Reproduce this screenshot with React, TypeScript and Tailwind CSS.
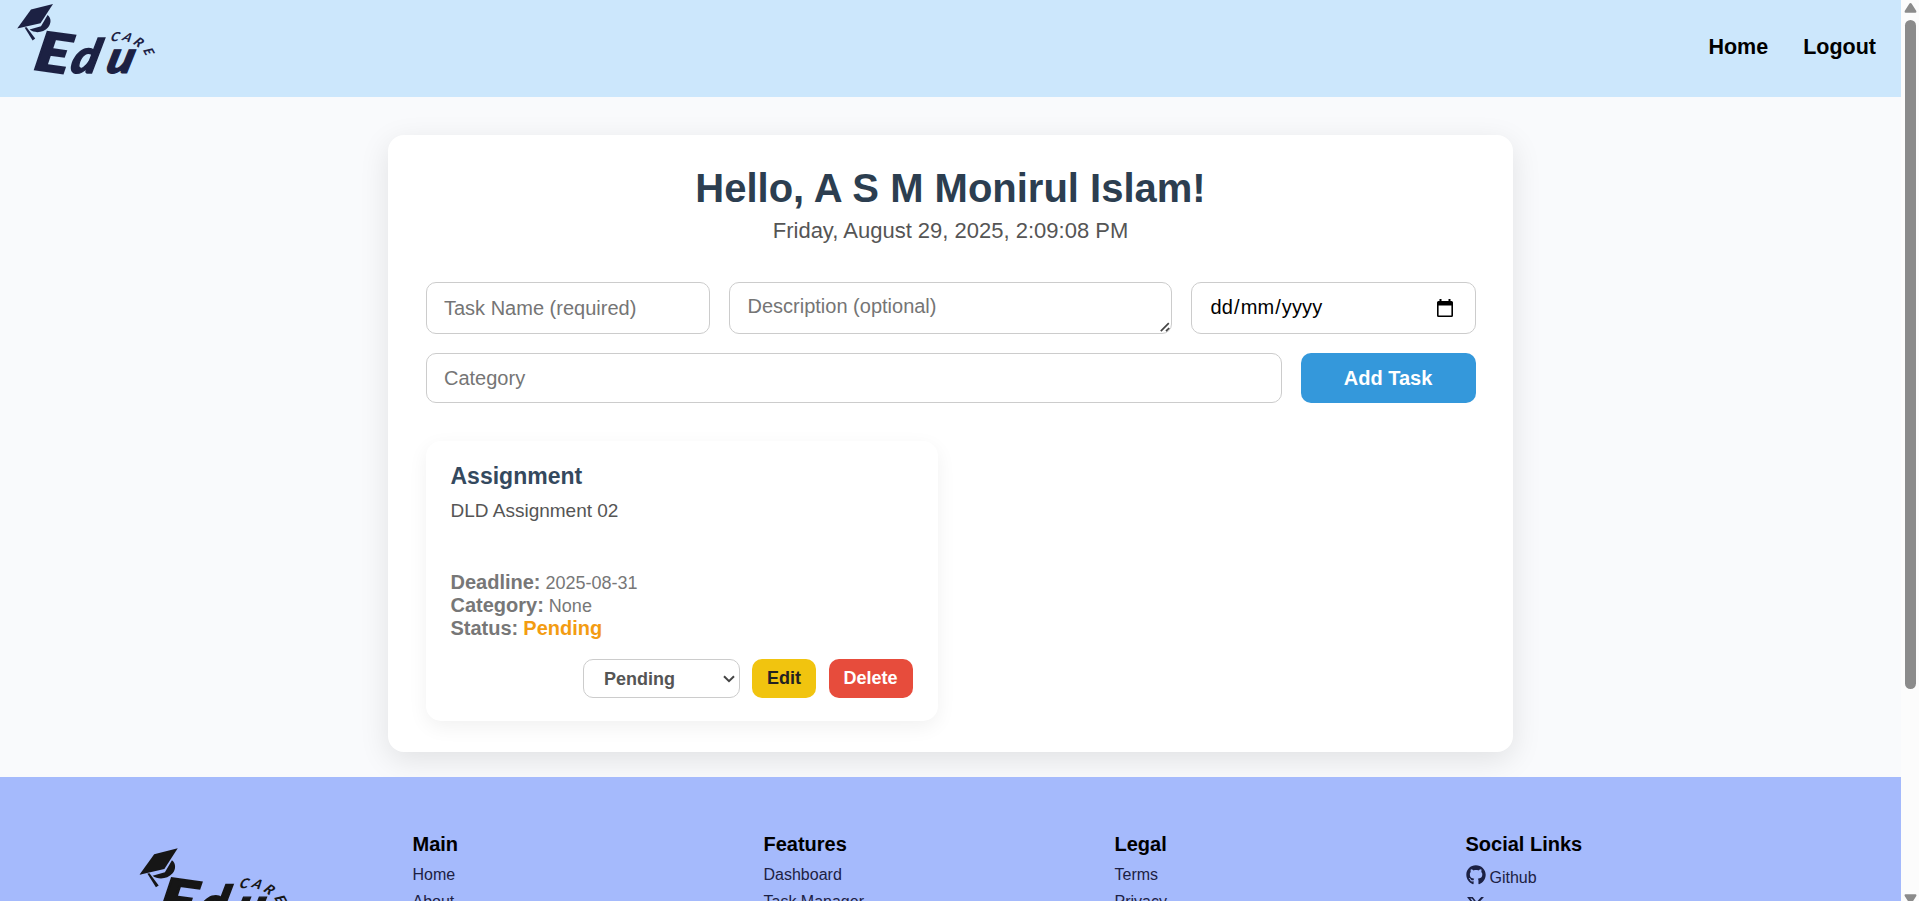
import React from "react";
import { FaGithub, FaXTwitter } from "react-icons/fa6";

function Logo({ className }: { className: string }) {
  return (
    <svg viewBox="0 0 170 97" className={className} fill="currentColor" aria-label="Edu Care">
      <path d="M17.2 28.6 L31 9.5 L53 4 L40.5 23.2 Z" />
      <path d="M29.5 29.6 L41 26.2 L47.6 15 C51.5 18 51.4 23.5 48 27.6 C43.5 32.8 34.5 33.6 29.5 29.6 Z" />
      <path d="M24.6 27.6 L26.6 27.2 L35.2 38.6 L32.6 40.4 Z" />
      <g
        fontFamily="Lato, 'Liberation Sans', sans-serif"
        fontWeight={900}
        fontStyle="italic"
        stroke="currentColor"
        strokeLinejoin="miter"
      >
        <text transform="translate(33 69.3) rotate(8) skewX(-2) scale(1.2 1)" fontSize="54" strokeWidth="2">E</text>
        <text transform="translate(69 72.5) skewX(-14) scale(1.06 1)" fontSize="47" strokeWidth="1.4">d</text>
        <text transform="translate(104.5 72.5) skewX(-15) scale(1.08 1)" fontSize="45" strokeWidth="1.2">u</text>
      </g>
      <g fontFamily="Lato, 'Liberation Sans', sans-serif" fontWeight={900} fontStyle="italic">
        <text transform="translate(110 41) rotate(3) skewX(-14)" fontSize="13">C</text>
        <text transform="translate(121.5 40) rotate(16) skewX(-14)" fontSize="12.5">A</text>
        <text transform="translate(132.5 43.5) rotate(34) skewX(-8)" fontSize="13">R</text>
        <text transform="translate(142.8 50) rotate(62) skewX(-8)" fontSize="13">E</text>
      </g>
    </svg>
  );
}

function Header() {
  return (
    <header className="flex h-[97px] shrink-0 items-start justify-between bg-[#cce7fc]">
      <Logo className="h-[97px] w-[170px] text-[#1c2143]" />
      <nav className="flex gap-[35px] pt-[35px] pr-[25px] text-[21.5px] leading-[25px] font-bold text-black">
        <a>Home</a>
        <a>Logout</a>
      </nav>
    </header>
  );
}

function TaskForm() {
  const field =
    "block rounded-[10px] border border-[#ccc] bg-white pr-[18px] text-[20px] leading-[23px] outline-none placeholder:text-[#757575] placeholder:opacity-100";
  return (
    <form className="mt-[38px] flex flex-col gap-[19px]">
      <div className="flex gap-[19px]">
        <input className={`${field} h-[52px] w-[284px] pl-[17.5px]`} placeholder="Task Name (required)" />
        <div className="relative h-[52px] w-[443px]">
          <textarea className={`${field} h-[52px] w-[443px] resize-none overflow-hidden pt-[12px] pl-[18px]`} placeholder="Description (optional)" />
          <svg viewBox="0 0 10 10" className="absolute right-[2px] bottom-[2px] size-[10px]" fill="none" stroke="#444" strokeWidth="1.700">
            <path d="M.8 9.200 8.800 1.200M6 9.200 9.200 6" />
          </svg>
        </div>
        <div className={`${field} flex h-[52px] w-[285px] items-center justify-between pl-[18px] text-black`}>
          <span className="pb-px tracking-[0.1px]">
            <span className="px-px">dd</span>/<span className="px-px">mm</span>/<span className="px-px">yyyy</span>
          </span>
          <svg viewBox="0 0 16 18" className="mr-[4px] mb-px h-[18px] w-[16px]">
            <path
              fillRule="evenodd"
              d="M2.500 0h2v2h7V0h2v2h1Q16 2 16 3.500v13Q16 18 14.500 18h-13Q0 18 0 16.500v-13Q0 2 1.500 2h1ZM1.600 6.500v9.900h12.800v-9.900Z"
            />
          </svg>
        </div>
      </div>
      <div className="flex gap-[19px]">
        <input className={`${field} h-[50px] w-[856px] pl-[17.5px]`} placeholder="Category" />
        <button type="button" className="h-[50px] w-[175px] rounded-[10px] bg-[#3498db] text-[20px] leading-[23px] font-bold text-white">
          Add Task
        </button>
      </div>
    </form>
  );
}

function TaskCard() {
  return (
    <article className="mt-[38px] flex h-[280px] w-[512px] flex-col rounded-[15px] bg-white px-[25px] pt-[22px] shadow-[0_6px_20px_rgba(0,0,0,0.06)]">
      <h3 className="text-[23px] leading-[26px] font-bold text-[#34495e]">Assignment</h3>
      <p className="mt-[11px] text-[19px] leading-[22px] text-[#555]">DLD Assignment 02</p>
      <div className="mt-[49px] text-[18px] leading-[23px] text-[#777]">
        <p className="h-[23px]"><strong className="text-[20px]">Deadline:</strong> 2025-08-31</p>
        <p className="h-[23px]"><strong className="text-[20px]">Category:</strong> None</p>
        <p className="h-[23px]">
          <strong className="text-[20px]">Status:</strong> <strong className="text-[20px] text-[#f39c12]">Pending</strong>
        </p>
      </div>
      <div className="mt-[19px] flex justify-end text-[18px] leading-[21px] font-bold">
        <div className="flex h-[39px] w-[157px] items-center justify-between rounded-[10px] border border-[#ccc] pr-[4px] pl-[20.5px] text-[#555]">
          <span className="pt-px">Pending</span>
          <svg viewBox="0 0 12 8" className="h-[8px] w-[12px]" fill="none" stroke="#444" strokeWidth="2">
            <path d="M1 1.200 6 6.200 11 1.200" />
          </svg>
        </div>
        <button className="ml-[12px] h-[39px] w-[64px] rounded-[10px] bg-[#f1c40f] pb-px pl-px text-[#222]">Edit</button>
        <button className="ml-[13px] h-[39px] w-[84px] rounded-[10px] bg-[#e74c3c] pb-px text-white">Delete</button>
      </div>
    </article>
  );
}

function FooterColumn({ title, links }: { title: string; links: string[] }) {
  return (
    <div className="w-[351px] shrink-0">
      <h4 className="text-[20px] leading-[23px] font-bold text-black">{title}</h4>
      <ul className="mt-[10px] flex flex-col gap-[9px] text-[16px] leading-[18px] text-[#1c2143]">
        {links.map((link) => (
          <li key={link}>{link}</li>
        ))}
      </ul>
    </div>
  );
}

function Footer() {
  return (
    <footer className="flex h-[124px] shrink-0 overflow-hidden bg-[#a5bafc] pt-[56px]">
      <div className="w-[412.5px] shrink-0 pt-[11px] pl-[121px]">
        <Logo className="h-[104px] w-[182px] text-[#161616]" />
      </div>
      <FooterColumn title="Main" links={["Home", "About"]} />
      <FooterColumn title="Features" links={["Dashboard", "Task Manager"]} />
      <FooterColumn title="Legal" links={["Terms", "Privacy"]} />
      <div>
        <h4 className="text-[20px] leading-[23px] font-bold text-black">Social Links</h4>
        <ul className="mt-[10px] flex flex-col gap-[8px] text-[16px] leading-[20px] text-[#1c2143]">
          <li className="flex h-[21px] gap-[4px]">
            <FaGithub className="-mt-px size-[20px]" />
            <span className="pt-[2px]">Github</span>
          </li>
          <li className="flex gap-[4px]">
            <FaXTwitter className="size-[20px]" />
          </li>
        </ul>
      </div>
    </footer>
  );
}

function Scrollbar() {
  return (
    <div className="flex h-full w-[18px] shrink-0 flex-col items-center bg-[#fcfcfc]">
      <svg viewBox="0 0 12 10" className="mt-[3px] h-[10px] w-[13px] shrink-0" fill="#8b8b8b">
        <path d="M6 0Q6.700 0 7.200.8L11.800 8Q12.300 9.700 11 9.700H1Q-.3 9.700.2 8L4.800.8Q5.300 0 6 0Z" />
      </svg>
      <div className="mt-[7px] h-[669px] w-[11px] shrink-0 rounded-full bg-[#8b8b8b]" />
      <svg viewBox="0 0 12 10" className="mt-auto mb-[-3px] h-[10px] w-[13px] shrink-0" fill="#8b8b8b">
        <path d="M6 10Q6.700 10 7.200 9.200L11.800 2Q12.300.3 11 .3H1Q-.3.3.2 2L4.800 9.200Q5.300 10 6 10Z" />
      </svg>
    </div>
  );
}

export default function App() {
  return (
    <div className="flex h-[901px] w-[1919px] overflow-hidden font-['Liberation_Sans',Arial,sans-serif]">
      <div className="flex w-[1901px] shrink-0 flex-col bg-[#f9fafc]">
        <Header />
        <main className="flex h-[680px] shrink-0 justify-center pt-[38px]">
          <section className="h-[617px] w-[1125px] rounded-[16px] bg-white px-[37.5px] pt-[30px] shadow-[0_8px_30px_rgba(0,0,0,0.1)]">
            <h1 className="text-center text-[40px] leading-[46px] font-bold text-[#2c3e50]">Hello, A S M Monirul Islam!</h1>
            <p className="mt-[7px] text-center text-[22px] leading-[26px] text-[#555]">Friday, August 29, 2025, 2:09:08 PM</p>
            <TaskForm />
            <TaskCard />
          </section>
        </main>
        <Footer />
      </div>
      <Scrollbar />
    </div>
  );
}
